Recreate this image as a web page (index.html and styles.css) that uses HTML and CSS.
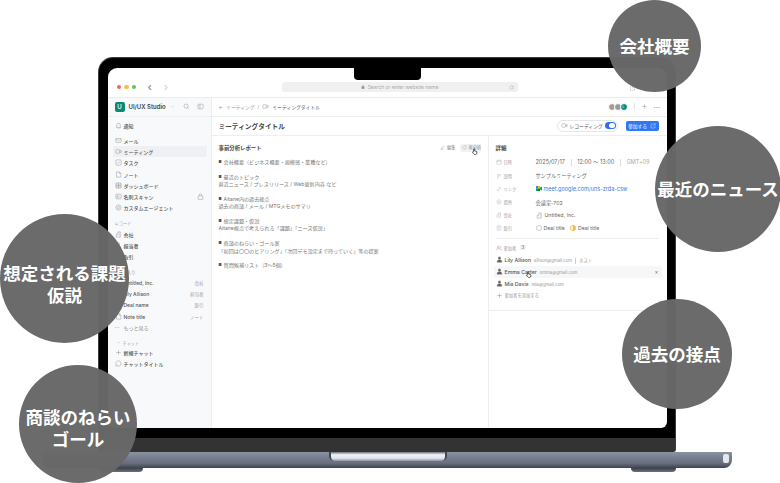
FILE: index.html
```html
<!DOCTYPE html>
<html lang="ja">
<head>
    <meta charset="UTF-8">
    <meta name="viewport" content="width=device-width, initial-scale=1.0">
    <title>UI/UX Studio</title>
    <link rel="stylesheet" href="styles.css">
</head>
<body>
    <svg class="sprite" width="0" height="0">
        <symbol id="i-bell" viewBox="0 0 24 24"><path d="M6 17V10a6 6 0 0 1 12 0v7l2 2H4zM10 22h4"/></symbol>
        <symbol id="i-mail" viewBox="0 0 24 24"><rect x="3" y="5" width="18" height="14" rx="2"/><path d="M3 7l9 6 9-6"/></symbol>
        <symbol id="i-video" viewBox="0 0 24 24"><rect x="3" y="6" width="13" height="12" rx="2"/><path d="M16 11l5-3v8l-5-3"/></symbol>
        <symbol id="i-check" viewBox="0 0 24 24"><rect x="3" y="3" width="18" height="18" rx="2"/><path d="M8 12l3 3 5-6"/></symbol>
        <symbol id="i-note" viewBox="0 0 24 24"><path d="M5 3h10l5 5v13H5zM15 3v5h5"/></symbol>
        <symbol id="i-grid" viewBox="0 0 24 24"><rect x="3" y="3" width="18" height="18" rx="2"/><path d="M3 12h18M12 3v18M3 7.500h18M3 16.500h18"/></symbol>
        <symbol id="i-card" viewBox="0 0 24 24"><rect x="3" y="4" width="18" height="16" rx="2"/><circle cx="9" cy="11" r="2.500"/><path d="M15 10h3M15 14h3M6 17h6"/></symbol>
        <symbol id="i-agent" viewBox="0 0 24 24"><circle cx="12" cy="12" r="9"/><circle cx="12" cy="12" r="4"/></symbol>
        <symbol id="i-building" viewBox="0 0 24 24"><path d="M4 21V11h6V3h8v18zM13 8h2M13 12h2M13 16h2M7 15h1"/></symbol>
        <symbol id="i-person" viewBox="0 0 24 24"><circle cx="12" cy="7" r="4"/><path d="M4 21c0-5 3-8 8-8s8 3 8 8z"/></symbol>
        <symbol id="i-deal" viewBox="0 0 24 24"><rect x="4" y="3" width="16" height="18" rx="2"/><path d="M8 8h8M8 12h8M8 16h5"/></symbol>
        <symbol id="i-plus" viewBox="0 0 24 24"><path d="M12 4v16M4 12h16"/></symbol>
        <symbol id="i-bubble" viewBox="0 0 24 24"><path d="M12 3a9 9 0 1 1-5 16.500L3 21l1.500-4A9 9 0 0 1 12 3z"/></symbol>
        <symbol id="i-lock" viewBox="0 0 24 24"><rect x="4" y="10" width="16" height="12" rx="2"/><path d="M8 10V7a4 4 0 0 1 8 0v3"/></symbol>
        <symbol id="i-search" viewBox="0 0 24 24"><circle cx="10.500" cy="10.500" r="7"/><path d="M16 16l5 5"/></symbol>
        <symbol id="i-panel" viewBox="0 0 24 24"><rect x="3" y="4" width="18" height="16" rx="3"/><path d="M10 4v16M6 8h1M6 12h1"/></symbol>
        <symbol id="i-chev" viewBox="0 0 24 24"><path d="M6 9l6 6 6-6"/></symbol>
        <symbol id="i-cal" viewBox="0 0 24 24"><rect x="3" y="5" width="18" height="16" rx="2"/><path d="M3 10h18M8 3v4M16 3v4"/></symbol>
        <symbol id="i-lines" viewBox="0 0 24 24"><path d="M4 6h16M4 11h16M4 16h8M4 21h5"/></symbol>
        <symbol id="i-link" viewBox="0 0 24 24"><path d="M10 14l5-5M8 11l-3 3a4 4 0 0 0 5 5l3-3M16 13l3-3a4 4 0 0 0-5-5l-3 3"/></symbol>
        <symbol id="i-pin" viewBox="0 0 24 24"><circle cx="12" cy="12" r="9"/><circle cx="12" cy="12" r="3"/></symbol>
        <symbol id="i-people" viewBox="0 0 24 24"><circle cx="9" cy="8" r="4"/><path d="M2 21c0-5 3-8 7-8s7 3 7 8M16 4a4 4 0 0 1 0 8M18 14c2 1 4 3 4 7"/></symbol>
        <symbol id="i-pen" viewBox="0 0 24 24"><path d="M4 20l1-5L16 4l4 4L9 19zM4 22h16"/></symbol>
        <symbol id="i-refresh" viewBox="0 0 24 24"><path d="M20 12a8 8 0 1 1-3-6.200M20 3v5h-5"/></symbol>
        <symbol id="i-external" viewBox="0 0 24 24"><path d="M12 4H4v16h16v-8M14 3h7v7M21 3l-9 9"/></symbol>
        <symbol id="i-share" viewBox="0 0 24 24"><path d="M8 9H5v12h14V9h-3M12 15V3M8 6l4-4 4 4"/></symbol>
        <symbol id="i-hand" viewBox="0 0 24 24"><path d="M9 13V4a1.800 1.800 0 0 1 3.600 0v6l5 1.200c1.500.4 2.400 1.600 2.400 3V18c0 2-2 4-4 4h-3c-2 0-3-1-4-2.500L5 15.500c-1-1.500 1-3 2.500-1.500z"/></symbol>
    </svg>

    <div class="laptop">
        <div class="bezel">
            <div class="camera"></div>
            <div class="screen">
                <div class="browser-bar">
                    <div class="lights"><span class="red"></span><span class="yellow"></span><span class="green"></span></div>
                    <div class="nav-arrows"><span class="arrow">‹</span><span class="arrow off">›</span></div>
                    <div class="address">
                        <svg class="ico lock-mini"><use href="#i-lock"/></svg>
                        <span>Search or enter website name</span>
                        <svg class="ico reload"><use href="#i-refresh"/></svg>
                    </div>
                    <svg class="ico share"><use href="#i-share"/></svg>
                </div>
                <div class="app">
                    <aside class="sidebar">
                        <div class="workspace">
                            <span class="logo">U</span>
                            <span class="ws-name">UI/UX Studio</span>
                            <svg class="ico ws-chev"><use href="#i-chev"/></svg>
                            <svg class="ico ws-search"><use href="#i-search"/></svg>
                            <svg class="ico"><use href="#i-panel"/></svg>
                        </div>
                        <nav class="side-nav">
                            <a class="item"><svg class="ico"><use href="#i-bell"/></svg>通知</a>
                            <a class="item first"><svg class="ico"><use href="#i-mail"/></svg>メール</a>
                            <a class="item active"><svg class="ico"><use href="#i-video"/></svg>ミーティング</a>
                            <a class="item"><svg class="ico"><use href="#i-check"/></svg>タスク</a>
                            <a class="item"><svg class="ico"><use href="#i-note"/></svg>ノート</a>
                            <a class="item"><svg class="ico"><use href="#i-grid"/></svg>ダッシュボード</a>
                            <a class="item"><svg class="ico"><use href="#i-card"/></svg>名刺スキャン<svg class="ico tail"><use href="#i-lock"/></svg></a>
                            <a class="item"><svg class="ico"><use href="#i-agent"/></svg>カスタムエージェント</a>
                            <div class="side-label">レコード</div>
                            <a class="item"><svg class="ico"><use href="#i-building"/></svg>会社</a>
                            <a class="item"><svg class="ico"><use href="#i-person"/></svg>担当者</a>
                            <a class="item"><svg class="ico"><use href="#i-deal"/></svg>取引</a>
                            <div class="side-label">お気に入り</div>
                            <a class="item"><svg class="ico"><use href="#i-building"/></svg>Untitled, Inc.<span class="tag">会社</span></a>
                            <a class="item"><svg class="ico"><use href="#i-person"/></svg>Lily Allison<span class="tag">担当者</span></a>
                            <a class="item"><svg class="ico"><use href="#i-deal"/></svg>Deal name<span class="tag">取引</span></a>
                            <a class="item"><svg class="ico"><use href="#i-note"/></svg>Note title<span class="tag">ノート</span></a>
                            <a class="item more"><span class="dots">···</span>もっと見る</a>
                            <div class="side-label chat"><svg class="ico chev-small"><use href="#i-chev"/></svg>チャット</div>
                            <a class="item"><svg class="ico"><use href="#i-plus"/></svg>新規チャット</a>
                            <a class="item"><svg class="ico"><use href="#i-bubble"/></svg>チャットタイトル</a>
                        </nav>
                    </aside>
                    <main class="main">
                        <div class="crumbs">
                            <span class="back">←</span>
                            <span class="crumb-light">ミーティング</span>
                            <span class="crumb-light">/</span>
                            <svg class="ico"><use href="#i-video"/></svg>
                            <span>ミーティングタイトル</span>
                            <div class="crumb-tools">
                                <div class="avatars">
                                    <span class="avatar a1"></span><span class="avatar a2"></span><span class="avatar a3">L</span>
                                </div>
                                <span class="vline"></span>
                                <svg class="ico"><use href="#i-plus"/></svg>
                                <span class="dots wide">···</span>
                            </div>
                        </div>
                        <div class="title-row">
                            <h1>ミーティングタイトル</h1>
                            <div class="rec-pill">
                                <svg class="ico"><use href="#i-video"/></svg>
                                <span>レコーディング</span>
                                <span class="toggle"></span>
                            </div>
                            <button class="join">参加する<svg class="ico"><use href="#i-external"/></svg></button>
                        </div>
                        <div class="panes">
                            <section class="report">
                                <div class="report-head">
                                    <h2>事前分析レポート</h2>
                                    <span class="tool"><svg class="ico"><use href="#i-pen"/></svg>編集</span>
                                    <span class="tool chip"><svg class="ico"><use href="#i-refresh"/></svg>再分析</span>
                                    <svg class="cursor cursor-top"><use href="#i-hand"/></svg>
                                </div>
                                <p><span class="sq">■</span>会社概要（ビジネス概要・規模感・業種など）</p>
                                <p><span class="sq">■</span>最近のトピック<br>直近ニュース / プレスリリース / Web更新内容 など</p>
                                <p><span class="sq">■</span>Aitane内の過去接点<br>過去の商談 / メール / MTGメモのサマリ</p>
                                <p><span class="sq">■</span>想定課題・仮説<br>Aitane視点で考えられる「課題」「ニーズ仮説」</p>
                                <p><span class="sq">■</span>商談のねらい・ゴール案<br>「初回は〇〇のヒアリング」「次回デモ設定まで持っていく」等の提案</p>
                                <p><span class="sq">■</span>質問候補リスト（3〜5個）</p>
                            </section>
                            <section class="details">
                                <h2>詳細</h2>
                                <dl class="fields">
                                    <dt><svg class="ico"><use href="#i-cal"/></svg>日時</dt>
                                    <dd class="when">2025/07/17<i></i>12:00 〜 13:00<i></i><span class="tz">GMT+09</span></dd>
                                    <dt><svg class="ico"><use href="#i-lines"/></svg>説明</dt>
                                    <dd>サンプルミーティング</dd>
                                    <dt><svg class="ico"><use href="#i-link"/></svg>リンク</dt>
                                    <dd class="meet"><svg class="meet-logo" viewBox="0 0 12 10"><rect width="4" height="5" fill="#2a84fc"/><rect y="5" width="4" height="5" fill="#00ac47"/><rect x="4" width="4" height="5" fill="#ffba00"/><rect x="4" y="5" width="4" height="5" fill="#00832d"/><path d="M8 3l4-2v8l-4-2z" fill="#00ac47"/></svg><a>meet.google.com/uns-zrda-csw</a></dd>
                                    <dt><svg class="ico"><use href="#i-pin"/></svg>場所</dt>
                                    <dd>会議室-702</dd>
                                    <dt><svg class="ico"><use href="#i-building"/></svg>会社</dt>
                                    <dd><svg class="ico"><use href="#i-building"/></svg>Untitled, Inc.</dd>
                                    <dt><svg class="ico"><use href="#i-deal"/></svg>取引</dt>
                                    <dd class="deals"><span class="ring"></span>Deal title<span class="ring half"></span>Deal title</dd>
                                </dl>
                                <div class="people-head"><svg class="ico"><use href="#i-people"/></svg>参加者<span class="count">3</span></div>
                                <ul class="people">
                                    <li><svg class="ico solid"><use href="#i-person"/></svg><b>Lily Allison</b><span>allison@gmail.com</span><span class="host">ホスト</span></li>
                                    <li class="hover"><svg class="ico solid"><use href="#i-person"/></svg><b>Emma Carter</b><span>emma@gmail.com</span><em>×</em><svg class="cursor cursor-low"><use href="#i-hand"/></svg></li>
                                    <li><svg class="ico solid"><use href="#i-person"/></svg><b>Mia Davis</b><span>mia@gmail.com</span></li>
                                    <li class="add"><svg class="ico"><use href="#i-plus"/></svg>参加者を追加する</li>
                                </ul>
                            </section>
                        </div>
                    </main>
                </div>
            </div>
        </div>
        <div class="base"><span class="lip"></span><span class="shine"></span></div>
        <div class="feet"><span></span><span></span></div>
    </div>

    <div class="bubble b-company">会社概要</div>
    <div class="bubble b-news">最近のニュース</div>
    <div class="bubble b-issue">想定される課題<br>仮説</div>
    <div class="bubble b-goal">商談のねらい<br>ゴール</div>
    <div class="bubble b-past">過去の接点</div>
</body>
</html>
```

FILE: styles.css
```css
* {
    box-sizing: border-box;
}
body {
    margin: 0;
    width: 780px;
    height: 483px;
    overflow: hidden;
    position: relative;
    background: #fff;
    font-family: Inter, "Noto Sans CJK JP", sans-serif;
    color: #555;
}
.sprite {
    position: absolute;
}
.ico {
    width: 7px;
    height: 7px;
    flex: none;
    fill: none;
    stroke: #8a8a8a;
    stroke-width: 1.500;
}
.ico.solid {
    fill: #666;
    stroke: #666;
}

/* laptop */
.laptop {
    margin: 57px 0 0 42px;
    width: 690px;
    display: flex;
    flex-direction: column;
    align-items: center;
}
.bezel {
    position: relative;
    width: 578px;
    height: 395px;
    padding: 9.500px 8.500px 24px;
    border: 1.500px solid #3c3c3e;
    border-bottom: none;
    border-radius: 15px 15px 3px 3px;
    background: linear-gradient(#000 380px, #333 380px);
}
.camera {
    position: absolute;
    top: 9px;
    left: 254.500px;
    width: 67px;
    height: 13px;
    background: #000;
    border-radius: 0 0 4px 4px;
    z-index: 2;
}
.screen {
    height: 360px;
    background: #fff;
    border-radius: 9px 9px 6px 6px;
    overflow: hidden;
    display: flex;
    flex-direction: column;
}
.base {
    position: relative;
    width: 690px;
    height: 16px;
    border-radius: 0 1px 8px 8px;
    background: linear-gradient(#8b92a2 0, #777e8e 35%, #686e7d 70%, #3f4350 100%);
}
.lip {
    position: absolute;
    top: 0;
    left: 287px;
    width: 118px;
    height: 9px;
    border-radius: 0 0 5px 5px;
    background: linear-gradient(#6a6f7c 0, #eef1f6 30%, #dfe4ec 70%, #8b90a0 100%);
    border-left: 2px solid #444853;
    border-right: 2px solid #444853;
}
.shine {
    position: absolute;
    top: 2px;
    right: 3px;
    width: 6px;
    height: 9px;
    border-radius: 2px;
    background: #e3e7ee;
}
.feet {
    width: 578px;
    height: 4px;
    display: flex;
    justify-content: space-between;
}
.feet span {
    width: 45px;
    background: linear-gradient(#3c3f49, #6d717c);
    border-radius: 0 0 4px 4px;
}

/* browser chrome */
.browser-bar {
    height: 30px;
    flex: none;
    display: flex;
    align-items: center;
    padding: 10px 31px 0 9px;
    border-bottom: 1px solid #ececee;
}
.lights {
    display: flex;
    gap: 3px;
    width: 31px;
}
.lights span {
    width: 4.500px;
    height: 4.500px;
    border-radius: 50%;
}
.red { background: #ed6a5e; }
.yellow { background: #f4bf4f; }
.green { background: #61c554; }
.nav-arrows {
    display: flex;
    gap: 12px;
    width: 134px;
    font-size: 11px;
    line-height: 10px;
    color: #777;
}
.arrow.off {
    color: #ccc;
}
.address {
    width: 236px;
    height: 10px;
    border-radius: 3px;
    background: #f0f0f1;
    display: flex;
    align-items: center;
    justify-content: center;
    gap: 3px;
    position: relative;
    font-size: 5px;
    color: #aaa;
}
.lock-mini {
    width: 4px;
    height: 4px;
    fill: #999;
}
.reload {
    position: absolute;
    right: 4px;
    width: 5px;
    height: 5px;
}
.share {
    margin-left: auto;
    stroke: #aaa;
}

/* app */
.app {
    flex: 1;
    display: flex;
    min-height: 0;
}
.sidebar {
    width: 104px;
    flex: none;
    background: #f8f9fb;
    border-right: 1px solid #edeef0;
}
.workspace {
    height: 19px;
    display: flex;
    align-items: center;
    padding: 0 7px;
    border-bottom: 1px solid #edeef0;
}
.logo {
    width: 10px;
    height: 10px;
    border-radius: 2px;
    background: #0a8a74;
    color: #fff;
    font-size: 6px;
    font-weight: 500;
    display: flex;
    align-items: center;
    justify-content: center;
}
.ws-name {
    margin-left: 4px;
    font-size: 6px;
    font-weight: 600;
    color: #444;
    width: 40px;
}
.ws-chev {
    width: 5px;
    height: 5px;
    margin-left: 1px;
}
.ws-search {
    margin: 0 7px 0 8px;
}
.side-nav {
    padding: 3.500px 4px 0 5px;
    display: flex;
    flex-direction: column;
}
.item {
    height: 11.150px;
    flex: none;
    display: flex;
    align-items: center;
    gap: 2px;
    padding: 0 3px 0 2px;
    font-size: 5px;
    font-weight: 500;
    color: #555;
    border-radius: 2px;
}
.item.first {
    margin-top: 4px;
}
.item.active {
    background: #eff0f3;
}
.item .tail {
    margin-left: auto;
}
.tag {
    margin-left: auto;
    font-size: 4.500px;
    font-weight: 400;
    color: #a0a0a0;
}
.item.more {
    color: #888;
    font-weight: 400;
}
.dots {
    width: 7px;
    font-size: 6px;
    line-height: 1;
    color: #888;
    flex: none;
}
.dots.wide {
    width: 8px;
    font-size: 8px;
}
.side-label {
    height: 9px;
    flex: none;
    margin: 5px 0 1.500px 2px;
    display: flex;
    align-items: center;
    gap: 2px;
    font-size: 4.200px;
    color: #a0a0a0;
}
.side-label.chat {
    margin-bottom: 0;
}
.chev-small {
    width: 5px;
    height: 5px;
    margin-left: 1px;
}

/* main */
.main {
    flex: 1;
    min-width: 0;
    display: flex;
    flex-direction: column;
}
.crumbs {
    height: 19px;
    flex: none;
    display: flex;
    align-items: center;
    gap: 3px;
    padding: 0 5px 0 7px;
    border-bottom: 1px solid #edeef0;
    font-size: 4.800px;
    color: #555;
}
.back,
.crumb-light {
    color: #999;
}
.crumb-tools {
    margin-left: auto;
    display: flex;
    align-items: center;
    gap: 6px;
}
.avatars {
    display: flex;
}
.avatar {
    width: 8px;
    height: 8px;
    border-radius: 50%;
    border: 0.500px solid #fff;
    margin-left: -2px;
}
.a1 { background: #a99d90; }
.a2 { background: #9b9b9e; }
.a3 {
    background: #0a8a74;
    color: #fff;
    font-size: 4px;
    display: flex;
    align-items: center;
    justify-content: center;
}
.vline {
    width: 1px;
    height: 7px;
    background: #e2e2e4;
}
.title-row {
    height: 19px;
    flex: none;
    display: flex;
    align-items: center;
    padding: 0 8px 0 7px;
    border-bottom: 1px solid #edeef0;
}
h1 {
    margin: 0;
    font-size: 6.700px;
    font-weight: 700;
    color: #444;
}
.rec-pill {
    margin-left: auto;
    height: 12px;
    width: 61px;
    padding: 0 1px 0 3px;
    display: flex;
    align-items: center;
    gap: 2px;
    border: 0.500px solid #e6e6e8;
    border-radius: 6px;
    font-size: 4.800px;
    white-space: nowrap;
}
.toggle {
    margin-left: auto;
    position: relative;
    width: 14px;
    height: 7.500px;
    border-radius: 4px;
    background: #2f6fed;
}
.toggle::after {
    content: "";
    position: absolute;
    right: 1px;
    top: 1px;
    width: 5.500px;
    height: 5.500px;
    border-radius: 50%;
    background: #fff;
}
.join {
    margin-left: 8px;
    width: 33px;
    height: 10px;
    padding: 0;
    border: none;
    border-radius: 2px;
    background: #2f77f5;
    color: #fff;
    font: 400 4.800px Inter, "Noto Sans CJK JP", sans-serif;
    display: flex;
    align-items: center;
    justify-content: center;
    gap: 3px;
}
.join .ico {
    width: 6px;
    height: 6px;
    stroke: #fff;
}
.panes {
    flex: 1;
    display: flex;
    min-height: 0;
}
.report {
    width: 277px;
    flex: none;
    padding: 7px 7px 0;
    border-right: 1px solid #edeef0;
    font-size: 5.100px;
    line-height: 7.400px;
    color: #777;
}
.report p {
    margin: 0 0 7.400px;
}
.sq {
    display: inline-block;
    width: 5.100px;
    height: 7.400px;
    font-size: 3.400px;
    line-height: 7.400px;
    vertical-align: top;
    color: #555;
}
.report-head {
    position: relative;
    height: 10px;
    margin-bottom: 6.300px;
    display: flex;
    align-items: center;
    gap: 3px;
}
h2 {
    margin: 0;
    font-size: 5.400px;
    font-weight: 700;
    color: #444;
    line-height: 10px;
}
.report-head h2 {
    margin-right: auto;
}
.tool {
    display: flex;
    align-items: center;
    gap: 2px;
    font-size: 4.200px;
    color: #888;
    padding: 0 1px;
    white-space: nowrap;
}
.tool .ico {
    width: 5px;
    height: 5px;
}
.tool.chip {
    height: 8px;
    width: 21px;
    background: #f1f1f3;
    border-radius: 2px;
    padding: 0 2px;
}
.cursor {
    position: absolute;
    width: 7px;
    height: 7px;
    fill: #fff;
    stroke: #222;
    stroke-width: 2.500;
}
.cursor-top {
    right: 3px;
    top: 5px;
}
.details {
    flex: 1;
    min-width: 0;
    padding-top: 7px;
}
.details h2 {
    margin: 0 8px 3.400px 7px;
}
.fields {
    margin: 0 8px 3.400px 7px;
    padding-bottom: 3.400px;
    display: grid;
    grid-template-columns: 40px 1fr;
    grid-auto-rows: 13.200px;
    align-items: center;
    border-bottom: 0.500px solid #eceded;
    font-size: 5.200px;
}
.fields dt {
    display: flex;
    align-items: center;
    gap: 2px;
    font-size: 4.200px;
    color: #999;
}
.fields dt .ico {
    width: 6px;
    height: 6px;
    stroke: #aaa;
}
.fields dd {
    margin: 0;
    display: flex;
    align-items: center;
    gap: 2px;
    color: #666;
}
.when i {
    width: 0.500px;
    height: 7px;
    margin: 0 4px;
    background: #ddd;
}
.when {
    font-size: 5.500px;
}
.tz {
    color: #aaa;
}
.meet a {
    color: #3b78e0;
    font-size: 5.500px;
}
.meet-logo {
    width: 6px;
    height: 5px;
}
.ring {
    width: 6px;
    height: 6px;
    border-radius: 50%;
    border: 0.600px solid #ccc;
}
.ring.half {
    margin-left: 3px;
    border: 1px solid #f4b740;
    background: linear-gradient(90deg, #fff 50%, #f4b740 50%);
}
.people-head {
    height: 10px;
    margin: 0 8px 0 7px;
    display: flex;
    align-items: center;
    gap: 2px;
    font-size: 4.200px;
    color: #999;
}
.people-head .ico {
    width: 6px;
    height: 6px;
}
.count {
    margin-left: 2px;
    padding: 0 1.500px;
    border-radius: 1px;
    background: #f0f0f2;
    color: #666;
}
.people {
    list-style: none;
    margin: 1px 5px 4px 5px;
    padding: 0 0 4px;
}
.people li {
    position: relative;
    height: 12px;
    display: flex;
    align-items: baseline;
    gap: 2px;
    padding: 3.500px 3px 0 2px;
    font-size: 4.300px;
    line-height: 6px;
    color: #999;
    border-radius: 2px;
}
.people li .ico {
    align-self: center;
    margin-top: -3.500px;
}
.people b {
    font-size: 5.200px;
    font-weight: 500;
    color: #555;
    margin-right: 1px;
}
.host {
    margin-left: 1px;
    padding-left: 3px;
    border-left: 0.500px solid #ccc;
}
.people .hover {
    background: #f6f7f9;
}
.hover em {
    margin-left: auto;
    font-style: normal;
    font-size: 6px;
    color: #777;
}
.cursor-low {
    left: 31px;
    top: 5px;
}
.people .add {
    color: #999;
}
.details::after {
    content: "";
    display: block;
    height: 0.500px;
    background: #eceded;
}

/* callouts over the laptop */
.bubble {
    position: absolute;
    z-index: 5;
    display: flex;
    align-items: center;
    justify-content: center;
    text-align: center;
    border-radius: 50%;
    padding-top: 1px;
    background: rgba(104, 104, 104, 0.98);
    color: #fff;
    font-size: 17.500px;
    font-weight: 700;
    line-height: 21.500px;
    white-space: nowrap;
}
.b-company {
    left: 608px;
    top: 0;
    width: 93px;
    height: 92px;
}
.b-news {
    left: 655px;
    top: 126px;
    width: 126px;
    height: 126px;
}
.b-issue {
    left: 0;
    top: 214px;
    width: 129px;
    height: 129px;
    padding-top: 12px;
}
.b-goal {
    left: 19px;
    top: 365px;
    width: 118px;
    height: 118px;
    padding-top: 9px;
}
.b-past {
    left: 622px;
    top: 299px;
    width: 110px;
    height: 110px;
}
```
